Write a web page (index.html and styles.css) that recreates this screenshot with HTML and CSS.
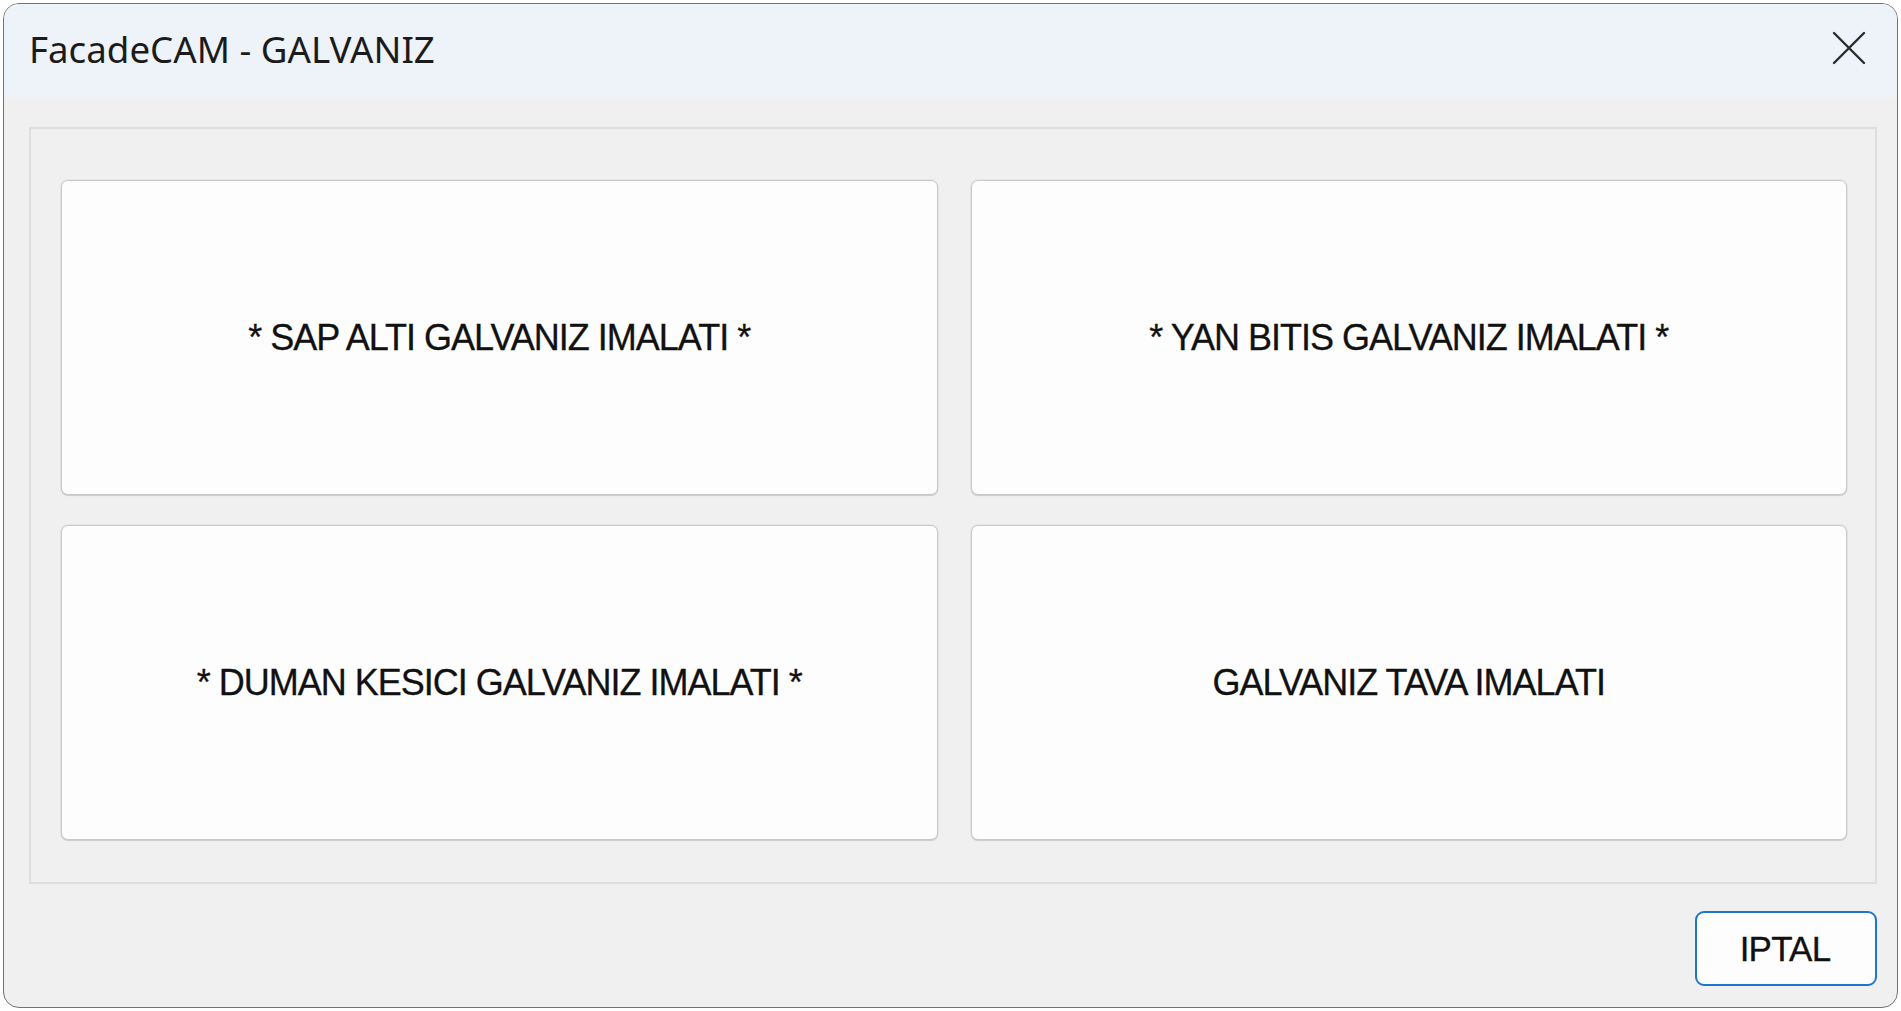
FILE: index.html
```html
<!DOCTYPE html>
<html lang="tr">
<head>
    <meta charset="UTF-8">
    <title>FacadeCAM - GALVANIZ</title>
    <link rel="stylesheet" href="styles.css">
</head>
<body>
    <div class="window">
        <div class="titlebar">
            <span class="title">FacadeCAM - GALVANIZ</span>
            <button class="close-btn" aria-label="Kapat">
                <svg width="34" height="34" viewBox="0 0 34 34">
                    <path d="M2 2 L32 32 M32 2 L2 32" stroke="#2b2b2b" stroke-width="2.4" stroke-linecap="round"/>
                </svg>
            </button>
        </div>
        <div class="client">
            <div class="group">
                <button class="choice">* SAP ALTI GALVANIZ IMALATI *</button>
                <button class="choice">* YAN BITIS GALVANIZ IMALATI *</button>
                <button class="choice">* DUMAN KESICI GALVANIZ IMALATI *</button>
                <button class="choice">GALVANIZ TAVA IMALATI</button>
            </div>
            <div class="footer">
                <button class="cancel-btn">IPTAL</button>
            </div>
        </div>
    </div>
</body>
</html>
```

FILE: styles.css
```css
body {
    margin: 0;
    padding: 3px;
    background-color: #ffffff;
    font-family: "Liberation Sans", Arial, sans-serif;
}

.window {
    width: 1895px;
    height: 1005px;
    box-sizing: border-box;
    border: 1px solid #737373;
    border-radius: 16px;
    overflow: hidden;
    background-color: #f0f0f0;
    display: flex;
    flex-direction: column;
}

.titlebar {
    height: 93px;
    flex-shrink: 0;
    background-color: #eef3fa;
    display: flex;
    align-items: center;
    justify-content: space-between;
    padding: 0 13px 0 25px;
}

.title {
    font-family: "Noto Sans", "Open Sans", sans-serif;
    font-size: 36.7px;
    color: #1b1b1b;
    padding-bottom: 4px;
}

.close-btn {
    width: 70px;
    height: 60px;
    border: none;
    background: transparent;
    padding: 0;
    display: flex;
    align-items: center;
    justify-content: center;
    margin-bottom: 6px;
}

.client {
    flex: 1;
    display: flex;
    flex-direction: column;
    padding: 30px 20px 21px 25px;
}

.group {
    height: 757px;
    box-sizing: border-box;
    border: 2px solid #dedede;
    padding: 51px 28px 42px 30px;
    display: grid;
    grid-template-columns: 1fr 1fr;
    grid-template-rows: 1fr 1fr;
    gap: 30px 33px;
}

.choice {
    font-family: "Liberation Sans", Arial, sans-serif;
    font-size: 36px;
    color: #111111;
    background-color: #fdfdfd;
    border: 1px solid #c9c9c9;
    border-radius: 7px;
    box-shadow: 0 0 0 1px rgba(0, 0, 0, 0.04), 0 1px 1px rgba(0, 0, 0, 0.12);
    cursor: pointer;
    letter-spacing: -1px;
    -webkit-text-stroke: 0.3px #111111;
}

.footer {
    flex: 1;
    display: flex;
    justify-content: flex-end;
    align-items: flex-end;
}

.cancel-btn {
    width: 182px;
    height: 75px;
    font-family: "Liberation Sans", Arial, sans-serif;
    font-size: 35px;
    color: #111111;
    background-color: #fdfdfd;
    border: 2px solid #1f76cc;
    border-radius: 9px;
    cursor: pointer;
    letter-spacing: -0.8px;
    padding-right: 8px;
    -webkit-text-stroke: 0.3px #111111;
}
```
